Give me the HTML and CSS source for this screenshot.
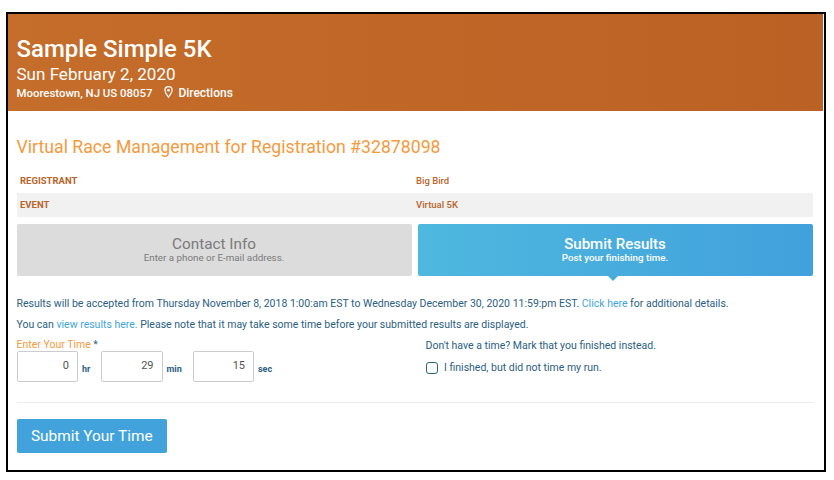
FILE: index.html
```html
<!DOCTYPE html>
<html lang="en">
<head>
<meta charset="utf-8">
<title>Sample Simple 5K</title>
<link rel="stylesheet" href="styles.css">
</head>
<body>
<div class="frame">
  <header class="hero">
    <h1 class="hero-title">Sample Simple 5K</h1>
    <div class="hero-date">Sun February 2, 2020</div>
    <div class="hero-place">
      <span>Moorestown, NJ US 08057</span>
      <span class="directions">
        <svg class="pin" width="9" height="12" viewBox="0 0 9 12" aria-hidden="true"><path d="M4.5 .7C2.4 .7 .9 2.3 .9 4.3c0 2.5 2.5 5 3.6 7 1.1-2 3.6-4.5 3.6-7C8.1 2.3 6.6 .7 4.5 .7z" fill="none" stroke="#fff" stroke-width="1.2"/><circle cx="4.5" cy="4.2" r="1.3" fill="#fff"/></svg>
        <span class="directions-text">Directions</span>
      </span>
    </div>
  </header>
  <main class="content">
    <h2 class="page-title">Virtual Race Management for Registration #32878098</h2>
    <div class="info-row"><span class="info-key">REGISTRANT</span><span class="info-val">Big Bird</span></div>
    <div class="info-row info-row-alt"><span class="info-key">EVENT</span><span class="info-val">Virtual 5K</span></div>
    <div class="tabs">
      <div class="tab tab-off"><span class="tab-name">Contact Info</span><span class="tab-sub">Enter a phone or E-mail address.</span></div>
      <div class="tab tab-on"><span class="tab-name">Submit Results</span><span class="tab-sub">Post your finishing time.</span></div>
    </div>
    <p class="note note-first">Results will be accepted from Thursday November 8, 2018 1:00:am EST to Wednesday December 30, 2020 11:59:pm EST. <a class="link" href="#">Click here</a> for additional details.</p>
    <p class="note">You can <a class="link" href="#">view results here.</a> Please note that it may take some time before your submitted results are displayed.</p>
    <div class="time-grid">
      <div class="time-col">
        <div class="time-label"><span class="orange">Enter Your Time</span> *</div>
        <div class="time-fields">
          <span class="box">0</span><span class="unit unit-hr">hr</span>
          <span class="box">29</span><span class="unit unit-min">min</span>
          <span class="box">15</span><span class="unit">sec</span>
        </div>
      </div>
      <div class="finish-col">
        <div class="finish-q">Don't have a time? Mark that you finished instead.</div>
        <label class="finish-check"><input class="check" type="checkbox"> I finished, but did not time my run.</label>
      </div>
    </div>
    <hr class="rule">
    <button class="submit" type="button">Submit Your Time</button>
  </main>
</div>
</body>
</html>
```
FILE: styles.css
```css
* { box-sizing: border-box; }
html, body { margin: 0; padding: 0; background: #fff; }
body { font-family: Roboto, "Liberation Sans", sans-serif; width: 834px; height: 480px; overflow: hidden; }
.frame { margin: 12px 0 0 6px; width: 820px; height: 460px; border: 2px solid #000; background: #fff; overflow: hidden; }
.hero { width: 815px; height: 97px; padding: 21px 0 0 8.5px; color: #fff; background: linear-gradient(90deg, #c56d2a, #bb6125); }
.hero-title { margin: 0; font-size: 23.95px; line-height: 28px; font-weight: 500; }
.hero-date { font-size: 17.05px; line-height: 23px; font-weight: 400; }
.hero-place { display: flex; gap: 12px; font-size: 11.4px; line-height: 14px; font-weight: 500; }
.directions { display: flex; align-items: center; gap: 5px; }
.directions-text { font-size: 12px; }
.pin { display: block; margin-top: -3px; }
.content { padding: 25px 11px 0 8.5px; }
.page-title { margin: 0; font-size: 17.7px; line-height: 22px; font-weight: 400; color: #f59a3d; height: 33px; }
.info-row { display: grid; grid-template-columns: 396px 1fr; align-items: center; height: 24px; padding: 0 0 2px 3.5px; font-size: 9.5px; color: #b9642a; }
.info-row-alt { background: #f1f1f1; }
.info-key { font-weight: 700; }
.info-val { font-weight: 500; }
.tabs { display: grid; grid-template-columns: 395px 395px; column-gap: 6px; margin-top: 7px; }
.tab { position: relative; display: flex; flex-direction: column; align-items: center; justify-content: center; height: 52px; border-radius: 2px; padding-bottom: 2px; }
.tab-off { background: #dcdcdc; color: #7a7a7a; }
.tab-on { background: linear-gradient(90deg, #4eb8df, #41a1dc); color: #fff; }
.tab-on::after { content: ""; position: absolute; left: 190px; bottom: -5px; border-left: 5px solid transparent; border-right: 5px solid transparent; border-top: 5px solid #47addd; }
.tab-name { font-size: 15px; line-height: 16px; font-weight: 500; }
.tab-off .tab-name { font-size: 15.3px; font-weight: 400; }
.tab-sub { font-size: 9.8px; line-height: 11px; font-weight: 400; }
.tab-on .tab-sub { font-weight: 500; }
.note { margin: 0; font-size: 10.5px; line-height: 14px; color: #2b6083; margin-top: 7px; }
.note-first { margin-top: 21px; }
.link { color: #3ea5de; text-decoration: none; }
.time-grid { display: grid; grid-template-columns: 409px 1fr; margin-top: 7px; }
.time-label { font-size: 10.5px; line-height: 12px; color: #2b6083; }
.orange { color: #f59a3d; }
.time-fields { display: flex; align-items: center; }
.box { display: block; width: 61.5px; height: 31px; border: 1px solid #ccc; border-radius: 2px; text-align: right; padding: 6px 8px 0 0; font-size: 11px; line-height: 16px; color: #555; }
.unit { font-size: 9px; font-weight: 700; color: #2b6083; margin: 4px 0 0 4px; }
.unit-hr { width: 19px; }
.unit-min { width: 26px; }
.finish-q { font-size: 10.5px; line-height: 14px; color: #2b6083; }
.finish-check { display: flex; align-items: center; font-size: 10.5px; line-height: 14px; color: #2b6083; margin-top: 8px; }
.check { appearance: none; width: 12px; height: 12px; margin: 0 6.5px 0 0; border: 1px solid #2b6083; border-radius: 3px; background: #fff; }
.rule { border: 0; height: 1px; background: #ececec; margin: 20px 0 0; }
.submit { display: block; margin-top: 16px; width: 150.5px; height: 34px; border: 0; border-radius: 2px; background: #42a3dc; color: #fff; font-family: inherit; font-size: 15.4px; padding: 0; }
```
